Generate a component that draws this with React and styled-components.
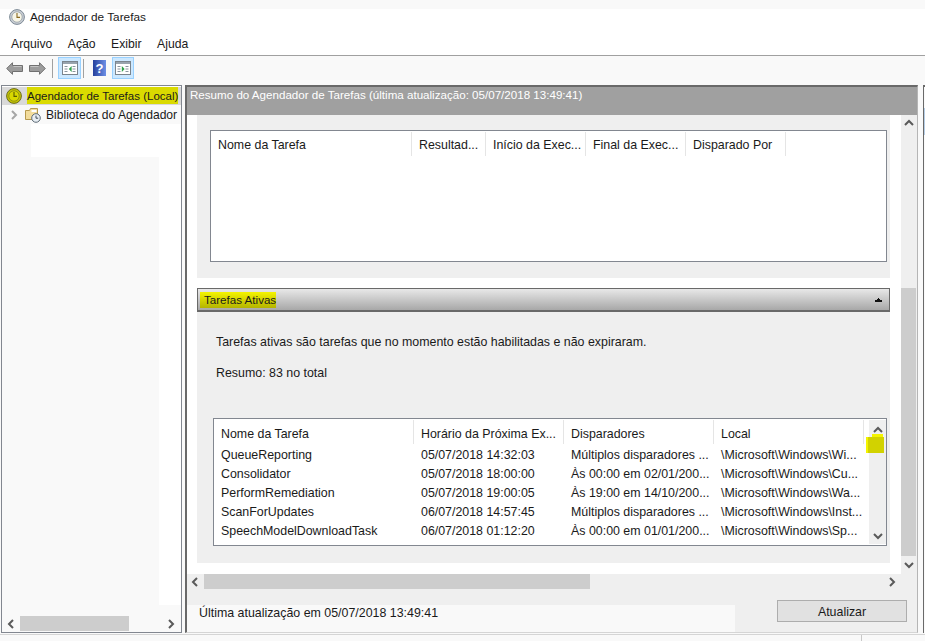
import styled, { createGlobalStyle } from 'styled-components'

const GlobalStyle = createGlobalStyle`
  html, body { margin: 0; padding: 0; background: #f9f9f9; }
  body { font-family: "Liberation Sans", Arial, sans-serif; font-size: 12.4px; color: #1a1a1a; overflow: hidden; }
`

const Window = styled.div`
  width: 925px;
  height: 641px;
  display: flex;
  flex-direction: column;
  background: #f9f9f9;
  overflow: hidden;
`

const TitleBar = styled.div`
  height: 16px;
  margin-top: 9px;
  padding-left: 9px;
  display: flex;
  align-items: center;
  gap: 5px;
  font-size: 11.8px;
  background: #fff;
`

const MenuBar = styled.div`
  height: 30px;
  box-sizing: content-box;
  display: flex;
  align-items: center;
  gap: 15.5px;
  padding-left: 11px;
  border-bottom: 1px solid #a0a0a0;
  background: #fff;
  font-size: 12.2px;
  & > span { position: relative; top: 4px; }
`

const ToolBar = styled.div`
  height: 28px;
  box-sizing: border-box;
  display: flex;
  align-items: center;
  padding: 0 0 4px 6px;
  background: #f9f9f9;
`

const ToolButton = styled.div`
  width: ${p => p.$w}px;
  height: 22px;
  box-sizing: border-box;
  display: flex;
  align-items: center;
  justify-content: center;
  margin-right: ${p => p.$mr || 0}px;
  background: ${p => (p.$on ? '#cce8ff' : 'transparent')};
  border: ${p => (p.$on ? '1px solid #99d1ff' : 'none')};
`

const ToolSep = styled.div`
  width: 1px;
  height: 19px;
  margin-right: ${p => p.$mr}px;
  background: #a0a0a0;
`

const Main = styled.div`
  flex: 1;
  display: flex;
  padding: 1px 0 1px 1px;
  min-height: 0;
`

const LeftPanel = styled.div`
  width: 181px;
  margin-right: 3px;
  box-sizing: border-box;
  border: 1px solid #828790;
  display: flex;
  flex-direction: column;
  background: #f9f9f9;
`

const TreeRow = styled.div`
  height: 19px;
  flex-shrink: 0;
  display: flex;
  align-items: center;
  white-space: nowrap;
  padding-left: ${p => p.$indent}px;
  gap: ${p => p.$gap}px;
  font-size: ${p => p.$size}px;
  background: ${p => (p.$selected ? 'linear-gradient(#fff 1px, #d9d9d9 1px)' : 'transparent')};
`

const Marked = styled.span`
  display: inline-flex;
  align-items: center;
  height: 17px;
  background: #dada00;
`

const ChevronSlot = styled.span`
  width: 10px;
  display: flex;
`

const TreeFill = styled.div`
  flex: 1;
  display: grid;
  grid-template-columns: 157px 1fr;
  grid-template-rows: 33px 1fr;
  min-height: 0;
`

const WhiteStrip = styled.div`
  grid-column: 1 / 3;
  margin-left: 29px;
  background: #fff;
`

const WhiteSide = styled.div`
  grid-column: 2;
  background: #fff;
`

const HScroll = styled.div`
  height: ${p => p.$h}px;
  flex-shrink: 0;
  box-sizing: border-box;
  display: flex;
  align-items: center;
  padding: ${p => p.$pt || 0}px ${p => p.$pr}px ${p => p.$pb || 0}px ${p => p.$pl}px;
`

const Thumb = styled.div`
  width: ${p => p.$w}px;
  height: 15px;
  margin-left: 5px;
  margin-right: auto;
  background: #cdcdcd;
`

const RightPanel = styled.div`
  width: 733px;
  margin-right: 5px;
  box-sizing: border-box;
  border-left: 2px solid #696969;
  border-top: 2px solid #696969;
  border-right: 1px solid #b5b5b5;
  border-bottom: 1px solid #d5d5d5;
  display: flex;
  flex-direction: column;
  min-width: 0;
  background: #efefef;
`

const RightEdge = styled.div`
  width: 2px;
  box-sizing: border-box;
  border-left: 1px solid #696969;
  border-top: 2px solid #696969;
  background: linear-gradient(#f9f9f9 21px, #b5cde6 21px, #b5cde6 48px, #f9f9f9 48px);
`

const SummaryHeader = styled.div`
  height: 28px;
  flex-shrink: 0;
  padding: 1px 0 0 3px;
  box-sizing: border-box;
  background: #a0a0a0;
  color: #fff;
  font-size: 11.6px;
`

const ScrollArea = styled.div`
  flex: 1;
  display: flex;
  background: #fff;
  min-height: 0;
`

const Content = styled.div`
  flex: 1;
  padding: 0 11px 0 10px;
  min-width: 0;
`

const Section = styled.div`
  background: #efefef;
  padding: ${p => p.$pad};
`

const Gap = styled.div`
  height: 10px;
`

const Table = styled.div`
  height: ${p => p.$h}px;
  box-sizing: border-box;
  background: #fff;
  border: 1px solid #828790;
  display: flex;
`

const TableMain = styled.div`
  flex: 1;
  min-width: 0;
`

const HeaderRow = styled.div`
  height: ${p => p.$h}px;
  display: flex;
`

const HeaderCell = styled.div`
  width: ${p => p.$w}px;
  height: 24px;
  margin-top: 1px;
  box-sizing: border-box;
  padding: ${p => p.$pt}px 0 0 7px;
  border-right: 1px solid #e5e5e5;
  white-space: nowrap;
  overflow: hidden;
`

const DataRow = styled.div`
  height: 19px;
  display: flex;
  align-items: center;
`

const DataCell = styled.div`
  width: ${p => p.$w}px;
  padding-left: 7px;
  box-sizing: border-box;
  white-space: nowrap;
  overflow: hidden;
`

const CollapseBar = styled.div`
  height: 24px;
  box-sizing: border-box;
  border: 1px solid #696969;
  border-bottom-width: 2px;
  background: linear-gradient(#e8e8e8, #a8a8a8);
  display: flex;
  align-items: center;
  justify-content: space-between;
  padding: 0 7px 0 2px;
  font-size: 11.6px;
`

const BarTitle = styled.span`
  display: inline-flex;
  align-items: center;
  height: 16px;
  padding: 0 0 0 4px;
  background: linear-gradient(#f4f400, #b4b400);
`

const Para = styled.div`
  margin-left: 3px;
  height: ${p => p.$h}px;
`

const TableScroll = styled.div`
  width: 17px;
  margin: 1px 0;
  flex-shrink: 0;
  background: #efefef;
  display: flex;
  flex-direction: column;
  align-items: center;
  justify-content: space-between;
  padding: 6px 0 4px;
  box-sizing: border-box;
  position: relative;
`

const YellowMark = styled.div`
  position: absolute;
  left: -1px;
  top: 17px;
  width: 16px;
  height: 16px;
  background: #d2d200;
  box-shadow: -2px 0 0 #f4f400;
  &::before {
    content: '';
    position: absolute;
    left: 4px;
    right: 1px;
    top: -3px;
    height: 3px;
    background: #f4f400;
  }
`

const PageScroll = styled.div`
  width: 16px;
  flex-shrink: 0;
  background: #efefef;
  display: flex;
  flex-direction: column;
  align-items: center;
  padding: 4px 0 5px;
  box-sizing: border-box;
`

const PageThumb = styled.div`
  width: 15px;
  align-self: flex-start;
  flex: 1;
  margin: 161px 0 5px;
  background: #cdcdcd;
`

const Footer = styled.div`
  height: 32px;
  flex-shrink: 0;
  display: flex;
`

const FooterNote = styled.div`
  width: 548px;
  margin-top: 5px;
  padding: 1px 0 0 12px;
  box-sizing: border-box;
  background: #f9f9f9;
`

const RefreshButton = styled.div`
  width: 130px;
  height: 22px;
  margin-left: 42px;
  padding-top: 1px;
  box-sizing: border-box;
  border: 1px solid #adadad;
  background: #e1e1e1;
  display: flex;
  align-items: center;
  justify-content: center;
`

const StatusBar = styled.div`
  height: 7px;
  flex-shrink: 0;
  box-sizing: border-box;
  border-top: 1px solid #d5d5d5;
  display: flex;
  justify-content: flex-end;
  background: #f9f9f9;
`

const StatusPart = styled.div`
  width: 63px;
  border-left: 1px solid #c8c8c8;
`

const Chevron = ({ dir, color = '#5a5a5a' }) => {
  const paths = {
    up: 'M1 6 L5 2 L9 6',
    down: 'M1 2 L5 6 L9 2',
    left: 'M6 1 L2 5 L6 9',
    right: 'M2 1 L6 5 L2 9',
  }
  const horizontal = dir === 'left' || dir === 'right'
  return (
    <svg width={horizontal ? 8 : 10} height={horizontal ? 10 : 8} viewBox={horizontal ? '0 0 8 10' : '0 0 10 8'}>
      <path d={paths[dir]} fill="none" stroke={color} strokeWidth="2" />
    </svg>
  )
}

const ClockIcon = ({ face = '#f7f5e6', ring = '#c9ced4', edge = '#7d8a96', hand = '#8a6a1f' }) => (
  <svg width="16" height="16" viewBox="0 0 16 16">
    <circle cx="8" cy="8" r="7.4" fill={ring} stroke={edge} strokeWidth="1" />
    <circle cx="8" cy="8" r="5.2" fill={face} stroke={edge} strokeWidth="0.6" />
    <path d="M8 4 V8.4 H11" fill="none" stroke={hand} strokeWidth="1.1" />
  </svg>
)

const FolderClockIcon = () => (
  <svg width="16" height="16" viewBox="0 0 16 16">
    <path d="M0.5 3.5 H4.5 L5.5 1.5 H12.5 V12.5 H0.5 Z" fill="#f2dc9c" stroke="#b79a4e" />
    <path d="M6.5 3 H11.5 V5 H6.5 Z" fill="#fff" />
    <circle cx="11" cy="11" r="4.3" fill="#e8eef3" stroke="#5f6d78" />
    <path d="M11 8.6 V11.2 H13.2" fill="none" stroke="#44505a" />
  </svg>
)

const ArrowIcon = ({ flip }) => (
  <svg width="17" height="13" viewBox="0 0 17 13" style={{ transform: flip ? 'scaleX(-1)' : undefined }}>
    <path d="M0.7 6.5 L6.5 0.7 V3.5 H16.5 V9.5 H6.5 V12.3 Z" fill="#9c9c9c" stroke="#707070" />
    <path d="M7.5 4.5 H15.5" stroke="#c4c4c4" />
  </svg>
)

const PaneIcon = ({ right }) => (
  <svg width="16" height="14" viewBox="0 0 16 14">
    <rect x="0.5" y="0.5" width="15" height="13" fill="#fff" stroke="#7a848d" />
    <rect x="1" y="1" width="14" height="2" fill="#98a3ad" />
    <path d="M2.5 5.5 H5.5 M2.5 8 H5.5 M2.5 10.5 H5.5 M10.5 5.5 H13.5 M10.5 8 H13.5 M10.5 10.5 H13.5" stroke="#8a949e" />
    <path d={right ? 'M6.8 5 L9.6 8 L6.8 11 Z' : 'M9.6 5 L6.8 8 L9.6 11 Z'} fill="#2fa24a" />
  </svg>
)

const HelpIcon = () => (
  <svg width="13" height="16" viewBox="0 0 13 16">
    <defs>
      <linearGradient id="helpFill" x1="0" x2="1" y1="0" y2="0">
        <stop offset="0" stopColor="#25409c" />
        <stop offset="1" stopColor="#6d8fe6" />
      </linearGradient>
    </defs>
    <rect width="13" height="16" fill="url(#helpFill)" />
    <text x="6.5" y="13" fontSize="13" fontWeight="700" fill="#fff" textAnchor="middle" fontFamily="Liberation Sans">?</text>
  </svg>
)

const MiniCaret = () => (
  <svg width="7" height="4" viewBox="0 0 7 4">
    <path d="M3 0 H4 V1 H5 V2 H7 V4 H0 V2 H2 V1 H3 Z" fill="#111" />
  </svg>
)

const topColumns = [
  ['Nome da Tarefa', 201],
  ['Resultad...', 74],
  ['Início da Exec...', 100],
  ['Final da Exec...', 100],
  ['Disparado Por', 100],
]

const activeColumns = [200, 150, 150, 150]

const activeHeaders = ['Nome da Tarefa', 'Horário da Próxima Ex...', 'Disparadores', 'Local']

const activeTasks = [
  ['QueueReporting', '05/07/2018 14:32:03', 'Múltiplos disparadores ...', '\\Microsoft\\Windows\\Wi...'],
  ['Consolidator', '05/07/2018 18:00:00', 'Às 00:00 em 02/01/200...', '\\Microsoft\\Windows\\Cu...'],
  ['PerformRemediation', '05/07/2018 19:00:05', 'Às 19:00 em 14/10/200...', '\\Microsoft\\Windows\\Wa...'],
  ['ScanForUpdates', '06/07/2018 14:57:45', 'Múltiplos disparadores ...', '\\Microsoft\\Windows\\Inst...'],
  ['SpeechModelDownloadTask', '06/07/2018 01:12:20', 'Às 00:00 em 01/01/200...', '\\Microsoft\\Windows\\Sp...'],
]

export default function App() {
  return (
    <>
      <GlobalStyle />
      <Window>
        <TitleBar>
          <ClockIcon />
          Agendador de Tarefas
        </TitleBar>
        <MenuBar>
          <span>Arquivo</span>
          <span>Ação</span>
          <span>Exibir</span>
          <span>Ajuda</span>
        </MenuBar>
        <ToolBar>
          <ToolButton $w={17} $mr={6}><ArrowIcon /></ToolButton>
          <ToolButton $w={17} $mr={6}><ArrowIcon flip /></ToolButton>
          <ToolSep $mr={5} />
          <ToolButton $w={23} $mr={2} $on><PaneIcon /></ToolButton>
          <ToolSep $mr={9} />
          <ToolButton $w={13} $mr={6}><HelpIcon /></ToolButton>
          <ToolButton $w={22} $on><PaneIcon right /></ToolButton>
        </ToolBar>
        <Main>
          <LeftPanel>
            <TreeRow $selected $indent={4} $gap={5} $size={11.5}>
              <ClockIcon face="#d8d800" ring="#c4c400" edge="#6c6c20" hand="#5c5c00" />
              <Marked>Agendador de Tarefas (Local)</Marked>
            </TreeRow>
            <TreeRow $indent={8} $gap={5} $size={12.1}>
              <ChevronSlot><Chevron dir="right" color="#a6a6a6" /></ChevronSlot>
              <FolderClockIcon />
              Biblioteca do Agendador
            </TreeRow>
            <TreeFill>
              <WhiteStrip />
              <div />
              <WhiteSide />
            </TreeFill>
            <HScroll $h={27} $pt={11} $pb={1} $pl={5} $pr={6}>
              <Chevron dir="left" />
              <Thumb $w={109} />
              <Chevron dir="right" />
            </HScroll>
          </LeftPanel>
          <RightPanel>
            <SummaryHeader>Resumo do Agendador de Tarefas (última atualização: 05/07/2018 13:49:41)</SummaryHeader>
            <ScrollArea>
              <Content>
                <Section $pad="15px 3px 16px 13px">
                  <Table $h={132}>
                    <TableMain>
                      <HeaderRow $h={25}>
                        {topColumns.map(([label, w]) => (
                          <HeaderCell key={label} $w={w} $pt={6}>{label}</HeaderCell>
                        ))}
                      </HeaderRow>
                    </TableMain>
                  </Table>
                </Section>
                <Gap />
                <CollapseBar>
                  <BarTitle>Tarefas Ativas</BarTitle>
                  <MiniCaret />
                </CollapseBar>
                <Section $pad="23px 3px 17px 16px">
                  <Para $h={31}>Tarefas ativas são tarefas que no momento estão habilitadas e não expiraram.</Para>
                  <Para $h={52}>Resumo: 83 no total</Para>
                  <Table $h={128}>
                    <TableMain>
                      <HeaderRow $h={26}>
                        {activeHeaders.map((label, i) => (
                          <HeaderCell key={label} $w={activeColumns[i]} $pt={7}>{label}</HeaderCell>
                        ))}
                      </HeaderRow>
                      {activeTasks.map(row => (
                        <DataRow key={row[0]}>
                          {row.map((cell, i) => (
                            <DataCell key={i} $w={activeColumns[i]}>{cell}</DataCell>
                          ))}
                        </DataRow>
                      ))}
                    </TableMain>
                    <TableScroll>
                      <Chevron dir="up" />
                      <YellowMark />
                      <Chevron dir="down" />
                    </TableScroll>
                  </Table>
                </Section>
              </Content>
              <PageScroll>
                <Chevron dir="up" />
                <PageThumb />
                <Chevron dir="down" />
              </PageScroll>
            </ScrollArea>
            <HScroll $h={26} $pb={11} $pl={4} $pr={21}>
              <Chevron dir="left" />
              <Thumb $w={386} />
              <Chevron dir="right" />
            </HScroll>
            <Footer>
              <FooterNote>Última atualização em 05/07/2018 13:49:41</FooterNote>
              <RefreshButton>Atualizar</RefreshButton>
            </Footer>
          </RightPanel>
          <RightEdge />
        </Main>
        <StatusBar>
          <StatusPart />
        </StatusBar>
      </Window>
    </>
  )
}
